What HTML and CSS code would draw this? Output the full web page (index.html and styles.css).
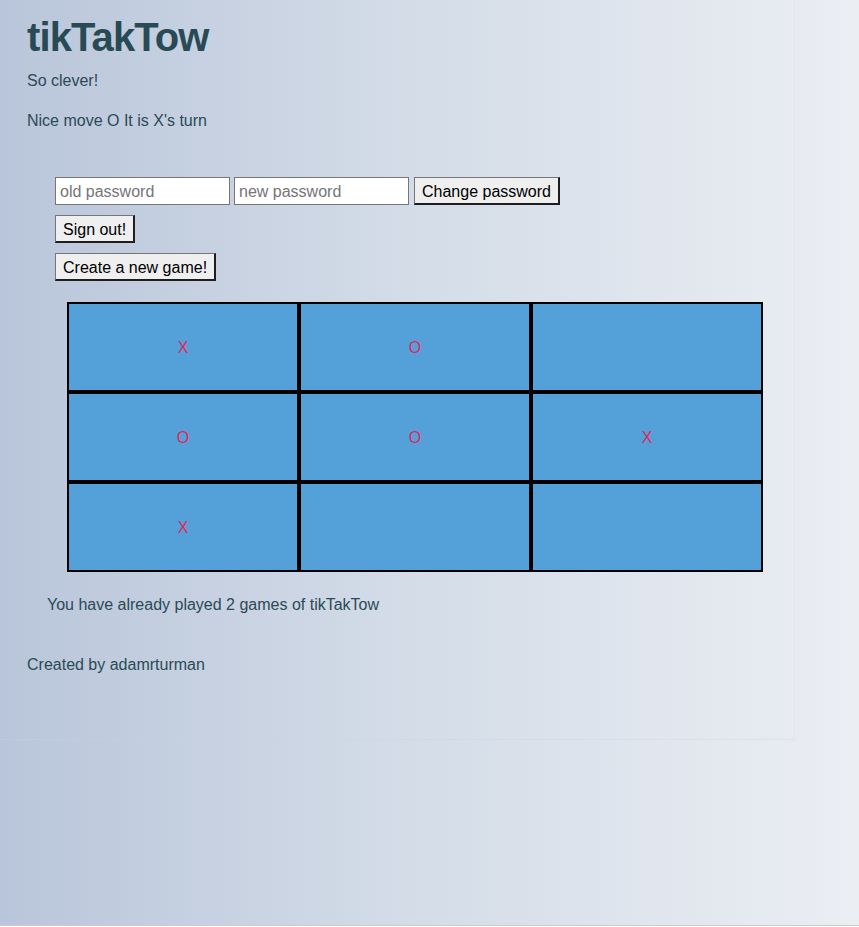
FILE: index.html
```html
<!DOCTYPE html>
<html>
<head>
<meta charset="utf-8">
<title>tikTakTow</title>
<link rel="stylesheet" href="styles.css">
</head>
<body>
<div class="page">
  <main class="container">
    <h1 class="title">tikTakTow</h1>
    <p class="msg msg-first">So clever!</p>
    <p class="msg msg-second">Nice move O It is X's turn</p>
    <section class="controls">
      <form class="pw-form">
        <input class="field" type="password" placeholder="old password">
        <input class="field" type="password" placeholder="new password">
        <button class="btn" type="button">Change password</button>
      </form>
      <div class="row"><button class="btn" type="button">Sign out!</button></div>
      <div class="row"><button class="btn" type="button">Create a new game!</button></div>
    </section>
    <div class="board">
      <div class="cell">x</div>
      <div class="cell">o</div>
      <div class="cell"></div>
      <div class="cell">o</div>
      <div class="cell">o</div>
      <div class="cell">x</div>
      <div class="cell">x</div>
      <div class="cell"></div>
      <div class="cell"></div>
    </div>
    <p class="stats">You have already played 2 games of tikTakTow</p>
    <footer class="credit">Created by adamrturman</footer>
  </main>
</div>
</body>
</html>
```

FILE: styles.css
```css
html, body {
  margin: 0;
  padding: 0;
}
body {
  background: #ffffff;
  font-family: "Liberation Sans", Arial, sans-serif;
  color: #2b4a55;
}
.page {
  height: 925px;
  border-bottom: 1px solid #c9cbd0;
  background: linear-gradient(to right, #b9c5da 0%, #d2dbe7 45%, #ebeef3 100%);
}
.container {
  width: 795px;
  height: 740px;
  box-sizing: border-box;
  padding: 14px 0 0 27px;
  border-right: 1px solid rgba(220, 226, 236, 0.5);
  border-bottom: 1px solid rgba(200, 210, 225, 0.35);
}
.title {
  margin: 0;
  font-size: 40px;
  line-height: 46px;
  font-weight: bold;
  letter-spacing: -0.9px;
  color: #284a55;
}
.msg {
  margin: 0;
  font-size: 16px;
  line-height: 18px;
}
.msg-first {
  margin-top: 12px;
}
.msg-second {
  margin-top: 22px;
}
.controls {
  margin: 47px 0 0 28px;
  display: flex;
  flex-direction: column;
  gap: 10px;
}
.pw-form {
  display: flex;
  align-items: center;
  gap: 4px;
  margin: 0;
}
.field {
  width: 175px;
  height: 28px;
  box-sizing: border-box;
  border: 1px solid #767676;
  border-radius: 0;
  padding: 2px 4px 0;
  font-family: "Liberation Sans", Arial, sans-serif;
  font-size: 16px;
  background: #fff;
  color: #000;
}
.field::placeholder {
  color: #757575;
}
.btn {
  height: 28px;
  box-sizing: border-box;
  padding: 2px 7px 0;
  font-family: "Liberation Sans", Arial, sans-serif;
  font-size: 16px;
  color: #000;
  background: #efefef;
  border-style: solid;
  border-width: 1px 2px 2px 1px;
  border-color: #767676 #1e1e1e #1e1e1e #767676;
  border-radius: 0;
}
.pw-form .btn {
  margin-left: 1px;
}
.row {
  display: flex;
}
.board {
  margin: 21px 0 0 40px;
  width: 696px;
  display: grid;
  grid-template-columns: repeat(3, 232px);
  grid-template-rows: repeat(3, 90px);
}
.cell {
  box-sizing: border-box;
  border: 2px solid #000;
  background: #54a1d9;
  color: #e8245a;
  font-size: 16px;
  padding-top: 2px;
  display: flex;
  align-items: center;
  justify-content: center;
  text-transform: uppercase;
}
.stats {
  margin: 24px 0 0 20px;
  font-size: 16px;
  line-height: 18px;
}
.credit {
  margin-top: 42px;
  font-size: 16px;
  line-height: 18px;
}
```
